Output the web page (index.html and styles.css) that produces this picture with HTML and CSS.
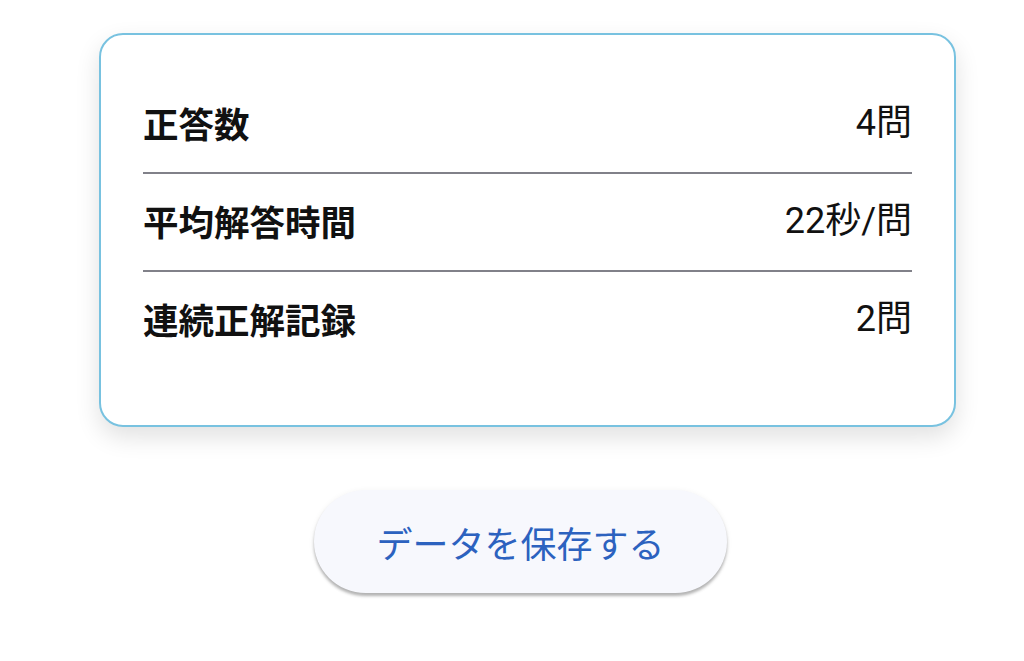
FILE: index.html
```html
<!DOCTYPE html>
<html lang="ja">
<head>
<meta charset="utf-8">
<title>結果</title>
<link rel="stylesheet" href="styles.css">
</head>
<body>
<main class="page">
  <section class="stats-card">
    <div class="stat-row">
      <span class="stat-label">正答数</span>
      <span class="stat-value">4問</span>
    </div>
    <div class="stat-row">
      <span class="stat-label">平均解答時間</span>
      <span class="stat-value">22秒/問</span>
    </div>
    <div class="stat-row">
      <span class="stat-label">連続正解記録</span>
      <span class="stat-value">2問</span>
    </div>
  </section>
  <button class="save-button" type="button">データを保存する</button>
</main>
</body>
</html>
```
FILE: styles.css
```css
html, body {
  margin: 0;
  padding: 0;
  background: #ffffff;
}

.page {
  display: flex;
  flex-direction: column;
  align-items: flex-start;
  padding-top: 33px;
  padding-bottom: 40px;
  font-family: Roboto, "Noto Sans CJK JP", sans-serif;
}

.stats-card {
  box-sizing: border-box;
  margin-left: 99px;
  width: 857px;
  border: 2px solid #78c2e0;
  border-radius: 24px;
  background: #ffffff;
  padding: 41px 42px 57px;
  box-shadow: 0 10px 24px rgba(0, 0, 0, 0.12);
}

.stat-row {
  display: flex;
  justify-content: space-between;
  align-items: center;
  padding: 23px 0 25px;
  line-height: 48px;
  font-size: 36px;
  color: #111111;
  border-bottom: 2px solid #818189;
}

.stat-row:last-child {
  border-bottom: none;
}

.stat-label {
  font-family: "Noto Sans CJK JP", sans-serif;
  font-weight: 700;
  font-size: 35.5px;
}

.stat-value {
  font-weight: 400;
}

.save-button {
  box-sizing: border-box;
  margin-top: 63px;
  margin-left: 314px;
  width: 413px;
  height: 103px;
  border: none;
  border-radius: 52px;
  background: #f7f8fd;
  color: #2c62bf;
  font-family: Roboto, "Noto Sans CJK JP", sans-serif;
  font-size: 36px;
  box-shadow: 0 3px 3px rgba(0, 0, 0, 0.28), 0 1px 6px rgba(0, 0, 0, 0.06);
  cursor: pointer;
}
```
